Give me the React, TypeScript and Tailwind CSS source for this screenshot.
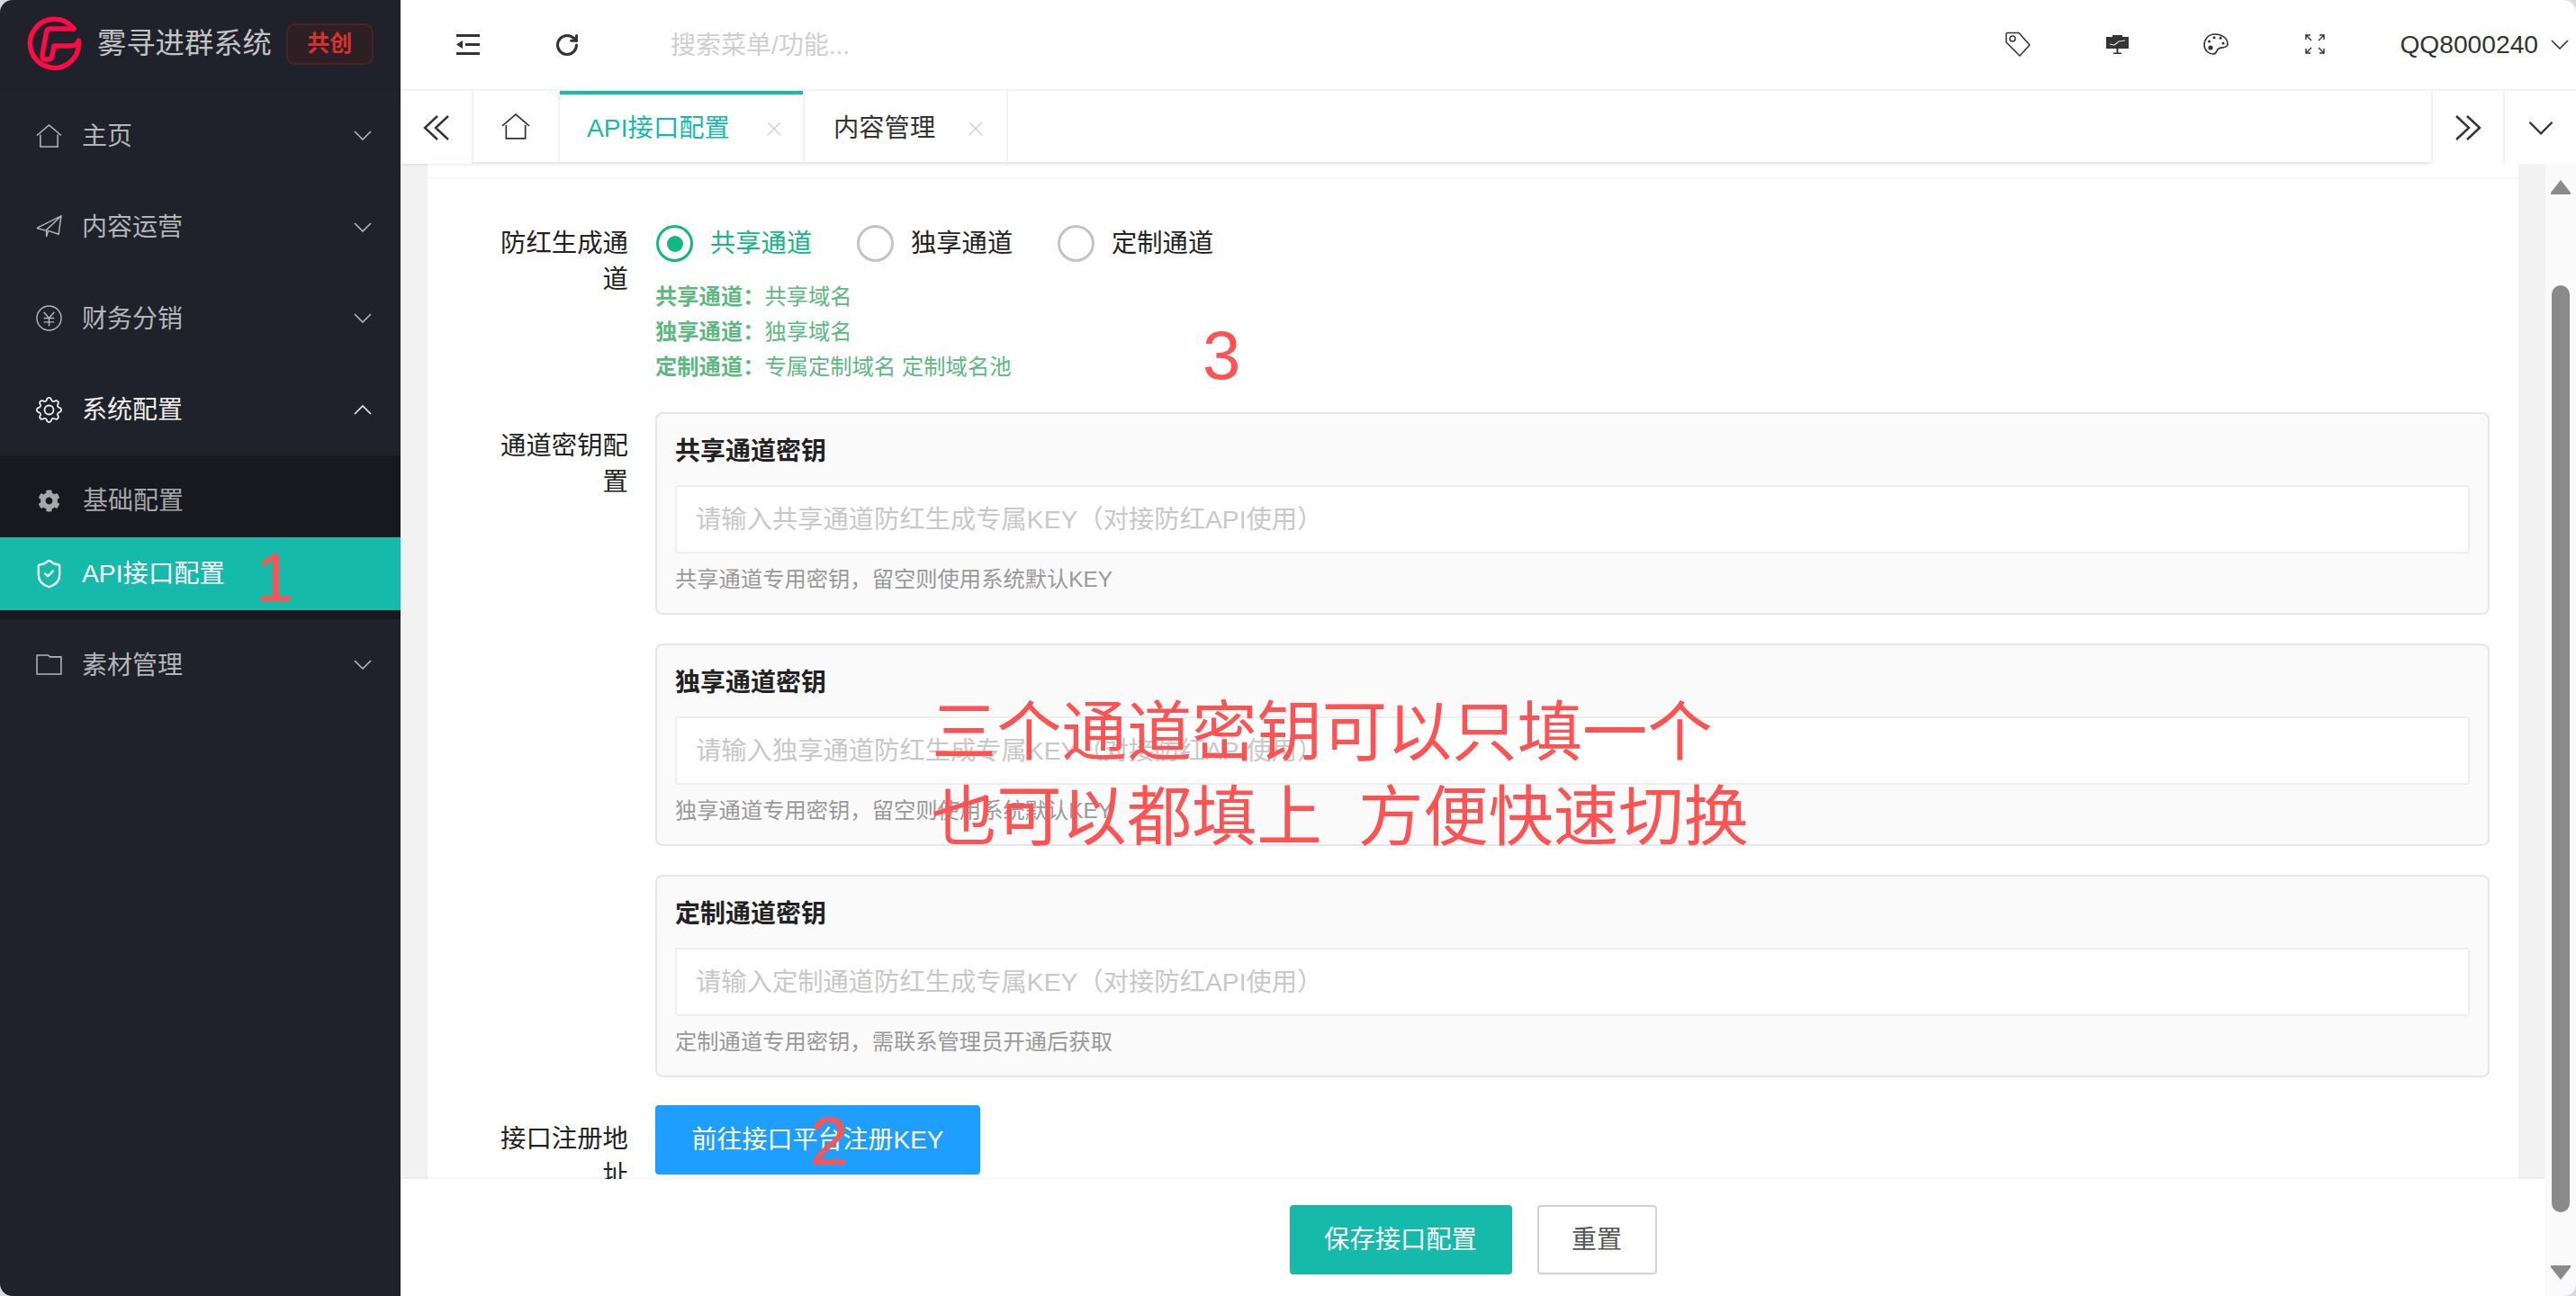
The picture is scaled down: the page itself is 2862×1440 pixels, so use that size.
import { RotateCw, ShieldCheck } from 'lucide-react';
import { FaCog } from 'react-icons/fa';
import { BsGear } from 'react-icons/bs';

const FONT = "font-['Liberation_Sans','Noto_Sans_CJK_SC',sans-serif]";

const Chevron = ({ up = false, className }: { up?: boolean; className?: string }) => (
  <svg viewBox="0 0 20 11" className={className} fill="none" stroke="currentColor" strokeWidth="1.6">
    <path d={up ? 'M1 10 10 1l9 9' : 'M1 1l9 9 9-9'} />
  </svg>
);

const HomeIcon = ({ className }: { className?: string }) => (
  <svg viewBox="0 0 30 27" className={className} fill="none" stroke="currentColor" strokeWidth="1.6">
    <path d="M1 13 15 1l14 12" />
    <path d="M5 12v14h20V12" />
  </svg>
);

const PlaneIcon = () => (
  <svg viewBox="0 0 30 27" className="w-[29px] h-[26px]" fill="none" stroke="currentColor" strokeWidth="1.5">
    <path d="M1 15 29 1l-3 21-12-4-2 7v-8L29 1M1 15l11 3" />
  </svg>
);

const YenIcon = () => (
  <svg viewBox="0 0 30 30" className="w-[29px] h-[29px]" fill="none" stroke="currentColor" strokeWidth="1.5">
    <circle cx="15" cy="15" r="14" />
    <path d="m9 8 6 7 6-7M15 15v9M9 15h12M9 19.5h12" />
  </svg>
);

const FolderIcon = () => (
  <svg viewBox="0 0 30 24" className="w-[29px] h-[23px]" fill="none" stroke="currentColor" strokeWidth="1.6">
    <path d="M1 23V1h13l2 2h13v20z" />
  </svg>
);

const CloseIcon = () => (
  <svg viewBox="0 0 16 16" className="ml-auto w-[16px] h-[16px] text-[#cfcfcf]" fill="none" stroke="currentColor" strokeWidth="1.4">
    <path d="m1 1 14 14M15 1 1 15" />
  </svg>
);

const Logo = () => (
  <svg viewBox="0 0 61 61" className="w-[61px] h-[61px] shrink-0" fill="none" stroke="#ff0a47" strokeLinecap="round" strokeLinejoin="round" strokeWidth="5.5">
    <path d="M52 14A27 27 0 1 0 57.5 31" />
    <path d="M52 14H26q-4 0-4.500 4L17 43q-.500 5 4 5h3q3 0 4-4l2-11h18q8 0 9.500-6v4" />
  </svg>
);

const MenuRow = ({ icon, label, open = false }: { icon: React.ReactNode; label: string; open?: boolean }) => (
  <div className={`flex items-center h-[101.5px] pl-[40px] pr-[32px] ${open ? 'text-[#f0f0f0]' : 'text-[#b4b5b8]'}`}>
    <span className="w-[29px] flex justify-center">{icon}</span>
    <span className="ml-[22px] pt-[2px] text-[28px]">{label}</span>
    <Chevron up={open} className="ml-auto w-[20px] h-[11px]" />
  </div>
);

const KeyPanel = ({ title, holder, help }: { title: string; holder: string; help: string }) => (
  <div className="h-[225px] border-2 border-[#e6e6e6] rounded-[8px] bg-[#fafafa] px-[20px] pt-[22px]">
    <div className="h-[40px] leading-[40px] text-[28px] font-bold text-[#222]">{title}</div>
    <div className="mt-[17px] h-[76px] border-2 border-[#eeeeee] rounded-[3px] bg-white pl-[21px] leading-[72px] text-[28.3px] text-[#c8c8c8]">
      {holder}
    </div>
    <div className="mt-[9px] h-[40px] leading-[40px] text-[24.3px] text-[#999]">{help}</div>
  </div>
);

const Radio = ({ label, on = false }: { label: string; on?: boolean }) => (
  <div className="flex items-center w-[223px]">
    <span className={`flex items-center justify-center w-[41px] h-[41px] rounded-full border-[3.5px] ${on ? 'border-[#10b981]' : 'border-[#c4c4c4]'}`}>
      {on && <span className="w-[18px] h-[18px] rounded-full bg-[#10b981]" />}
    </span>
    <span className={`ml-[19px] text-[28.3px] ${on ? 'text-[#10b981]' : 'text-[#222]'}`}>{label}</span>
  </div>
);

const Label = ({ text, className = '' }: { text: string; className?: string }) => (
  <div className={`w-[146px] shrink-0 text-right text-[28.4px] leading-[40px] text-[#222] ${className}`}>{text}</div>
);

const Note = ({ name, text }: { name: string; text: string }) => (
  <div className="h-[39px] leading-[39px] text-[24.3px] text-[#5cb97f]">
    <b>{name}：</b>
    {text}
  </div>
);

export default function App() {
  return (
    <div className={`relative h-[1440px] w-[2862px] overflow-hidden bg-[#d9dadd] ${FONT}`}>
      <div className="flex h-full rounded-[14px] overflow-hidden">
        {/* sidebar */}
        <aside className="w-[445px] shrink-0 bg-[#1f222a]">
          <div className="flex items-center h-[100px] pl-[30px] pb-[2px] border-b border-[#1c1f26]">
            <Logo />
            <span className="ml-[17px] text-[32.3px] text-[#c2c3c5]">雾寻进群系统</span>
            <span className="ml-[16px] flex items-center justify-center w-[97px] h-[46px] rounded-[10px] border-2 border-[#4a2227] bg-[#2c2025] text-[25px] font-bold text-[#d8302e]">
              共创
            </span>
          </div>
          <MenuRow icon={<HomeIcon className="w-[29px] h-[26px]" />} label="主页" />
          <MenuRow icon={<PlaneIcon />} label="内容运营" />
          <MenuRow icon={<YenIcon />} label="财务分销" />
          <MenuRow icon={<BsGear className="w-[29px] h-[29px]" />} label="系统配置" open />
          <div className="bg-[#18191e] py-[10px]">
            <div className="flex items-center h-[81px] pl-[42px] text-[#a6a7a9]">
              <FaCog className="w-[25px] h-[25px]" />
              <span className="ml-[25px] text-[28px]">基础配置</span>
            </div>
            <div className="flex items-center h-[81px] pl-[37px] bg-[#16baaa] text-white">
              <ShieldCheck className="w-[35px] h-[35px]" strokeWidth={1.6} />
              <span className="ml-[19px] text-[28.3px]">API接口配置</span>
            </div>
          </div>
          <MenuRow icon={<FolderIcon />} label="素材管理" />
        </aside>

        <main className="flex-1 flex flex-col min-w-0 bg-white">
          {/* top bar */}
          <header className="flex items-center h-[99px] shrink-0 text-[#333]">
            <div className="ml-[20px] w-[110px] flex justify-center">
              <svg viewBox="0 0 26 23" className="w-[26px] h-[23px]" fill="currentColor">
                <path d="M0 0h26v3H0zM0 20h26v3H0zM10 10h16v3H10zM0 11.500 7 7v9z" />
              </svg>
            </div>
            <div className="w-[110px] flex justify-center">
              <RotateCw className="w-[28px] h-[28px]" strokeWidth={2.6} />
            </div>
            <span className="ml-[60px] pt-[3px] text-[28px] text-[#cfcfcf]">搜索菜单/功能...</span>
            <div className="ml-auto flex items-center pr-[8px]">
              <div className="w-[110px] flex justify-center">
                <svg viewBox="0 0 28 28" className="w-[28px] h-[28px]" fill="none" stroke="currentColor" strokeWidth="1.5" strokeLinejoin="round">
                  <path d="M1 3q0-1.500 1.500-1.500H15L27 15 16 27 1 12z" />
                  <circle cx="8" cy="8" r="3" />
                </svg>
              </div>
              <div className="w-[110px] flex justify-center">
                <svg viewBox="0 0 25 21" className="w-[25px] h-[21px]" fill="#333">
                  <path d="M7 0h11v2H7zM0 2h25v13H0zM11.500 15h2v5h-2zM8 19.500h9v1.500H8z" />
                  <path d="M4 10l5 1 5-4 7-1" fill="none" stroke="#ddd" strokeWidth="1.2" />
                </svg>
              </div>
              <div className="w-[110px] flex justify-center">
                <svg viewBox="0 0 28 24" className="w-[28px] h-[24px]" fill="none" stroke="currentColor" strokeWidth="1.6">
                  <path d="M13 1C5 1 1 7 1 13s5 10 10 10c4 0 3-4 6-6s10 0 10-5C27 5 20 1 13 1z" />
                  <circle cx="6.500" cy="9" r="1.500" fill="currentColor" stroke="none" />
                  <circle cx="12" cy="4.800" r="1.500" fill="currentColor" stroke="none" />
                  <circle cx="19" cy="5.200" r="1.500" fill="currentColor" stroke="none" />
                  <circle cx="22" cy="11" r="1.500" fill="currentColor" stroke="none" />
                  <circle cx="8" cy="16" r="2.600" fill="currentColor" stroke="none" />
                </svg>
              </div>
              <div className="w-[110px] flex justify-center">
                <svg viewBox="0 0 22 22" className="w-[22px] h-[22px]" fill="none" stroke="currentColor" strokeWidth="1.4">
                  <path d="M1 6V1h5M1 1l6 6M16 1h5v5M21 1l-6 6M1 16v5h5M1 21l6-6M16 21h5v-5M21 21l-6-6" />
                </svg>
              </div>
              <span className="ml-[39px] text-[28.2px] text-[#333]">QQ8000240</span>
              <Chevron className="ml-[14px] w-[20px] h-[11px]" />
            </div>
          </header>

          {/* tab strip */}
          <div className="relative z-10 flex h-[83px] shrink-0 border-t-2 border-[#f4f4f4] text-[#333]">
            <div className="flex-1 flex h-[79px] pl-[79px] shadow-[0_3px_4px_-1px_rgba(0,0,0,0.14)]">
              <div className="flex items-center justify-center w-[98px] border-x-2 border-[#f2f2f2]">
                <HomeIcon className="w-[32px] h-[29px]" />
              </div>
              <div className="flex items-center w-[270px] pl-[30px] pr-[24px] border-t-4 border-[#16baaa] text-[#16baaa] text-[28.3px]">
                API接口配置
                <CloseIcon />
              </div>
              <div className="flex items-center w-[228px] pl-[32px] pr-[26px] pt-[4px] border-x-2 border-[#f2f2f2] text-[28.3px]">
                内容管理
                <CloseIcon />
              </div>
            </div>
            {/* scroll buttons sit over the strip's shadow */}
            <div className="absolute left-0 top-0 flex items-center justify-center w-[79px] h-[81px] bg-white">
              <svg viewBox="0 0 29 28" className="w-[29px] h-[28px]" fill="none" stroke="currentColor" strokeWidth="2.400">
                <path d="M16 1 2 14l14 13M28 1 14 14l14 13" />
              </svg>
            </div>
            <div className="flex items-center justify-center w-[80px] h-[81px] border-l-2 border-[#f2f2f2] bg-white">
              <svg viewBox="0 0 29 28" className="w-[29px] h-[28px]" fill="none" stroke="currentColor" strokeWidth="2.400">
                <path d="m1 1 14 13L1 27M13 1l14 13-14 13" />
              </svg>
            </div>
            <div className="flex items-center justify-center w-[81px] h-[81px] border-l-2 border-[#f2f2f2] bg-white">
              <Chevron className="w-[28px] h-[16px]" />
            </div>
          </div>

          <div className="flex-1 flex min-h-0">
            <div className="flex-1 flex flex-col min-w-0">
              {/* scrolled form */}
              <div className="flex-1 min-h-0 overflow-hidden bg-[#f2f2f2] px-[30px]">
                <div className="h-full bg-white pt-[15px]">
                  <div className="border-t-2 border-[#f8f8f8] pl-[77px] pr-[32px] pt-[52px]">
                    <div className="flex gap-[30px]">
                      <Label text="防红生成通道" className="-mt-[1px]" />
                      <div className="flex-1 -mt-[1px]">
                        <div className="flex h-[41px] pl-[1px]">
                          <Radio label="共享通道" on />
                          <Radio label="独享通道" />
                          <Radio label="定制通道" />
                        </div>
                        <div className="mt-[19px]">
                          <Note name="共享通道" text="共享域名" />
                          <Note name="独享通道" text="独享域名" />
                          <Note name="定制通道" text="专属定制域名 定制域名池" />
                        </div>
                      </div>
                    </div>
                    <div className="flex gap-[30px] mt-[31px]">
                      <Label text="通道密钥配置" className="mt-[17px]" />
                      <div className="flex-1 flex flex-col gap-[32px]">
                        <KeyPanel
                          title="共享通道密钥"
                          holder="请输入共享通道防红生成专属KEY（对接防红API使用）"
                          help="共享通道专用密钥，留空则使用系统默认KEY"
                        />
                        <KeyPanel
                          title="独享通道密钥"
                          holder="请输入独享通道防红生成专属KEY（对接防红API使用）"
                          help="独享通道专用密钥，留空则使用系统默认KEY"
                        />
                        <KeyPanel
                          title="定制通道密钥"
                          holder="请输入定制通道防红生成专属KEY（对接防红API使用）"
                          help="定制通道专用密钥，需联系管理员开通后获取"
                        />
                      </div>
                    </div>
                    <div className="flex gap-[30px] mt-[31px]">
                      <Label text="接口注册地址" className="mt-[17px]" />
                      <button className="w-[361px] h-[77px] rounded-[4px] bg-[#1e9fff] text-[28px] text-white">
                        前往接口平台注册KEY
                      </button>
                    </div>
                  </div>
                </div>
              </div>

              {/* footer actions */}
              <footer className="relative flex justify-center gap-[28px] h-[130px] shrink-0 pt-[29px] bg-white shadow-[0_-1px_3px_rgba(0,0,0,0.06)]">
                <button className="w-[247px] h-[77px] rounded-[4px] bg-[#16baaa] text-[28.3px] text-white">保存接口配置</button>
                <button className="w-[133px] h-[77px] rounded-[4px] border-2 border-[#d2d2d2] bg-white text-[28px] text-[#555]">重置</button>
              </footer>
            </div>

            {/* scrollbar */}
            <div className="w-[34px] shrink-0 flex flex-col items-center bg-[#fafafa]">
              <svg viewBox="0 0 22 16" className="w-[22px] h-[16px] mt-[18px]" fill="#8a8a8a">
                <path d="M11 0 22 14v2H0v-2z" />
              </svg>
              <div className="w-[20px] h-[1030px] mt-[101px] rounded-[10px] bg-[#8a8a8a]" />
              <svg viewBox="0 0 22 16" className="w-[22px] h-[16px] mt-[59px]" fill="#8a8a8a">
                <path d="M0 0h22v2L11 16 0 2z" />
              </svg>
            </div>
          </div>
        </main>
      </div>

      {/* red annotations drawn over the screenshot */}
      <div className="absolute left-[284px] top-[592px] text-[76px] leading-[100px] text-[#ff5252]">1</div>
      <div className="absolute left-[1336px] top-[345px] text-[76px] leading-[100px] text-[#ff5252]">3</div>
      <div className="absolute left-[900px] top-[1218px] text-[76px] leading-[100px] text-[#ff5252]">2</div>
      <div className="absolute left-[1035px] top-[767px] text-[72.3px] leading-[94px] text-[#ff5252] whitespace-pre">
        {'三个通道密钥可以只填一个\n也可以都填上  方便快速切换'}
      </div>
    </div>
  );
}
